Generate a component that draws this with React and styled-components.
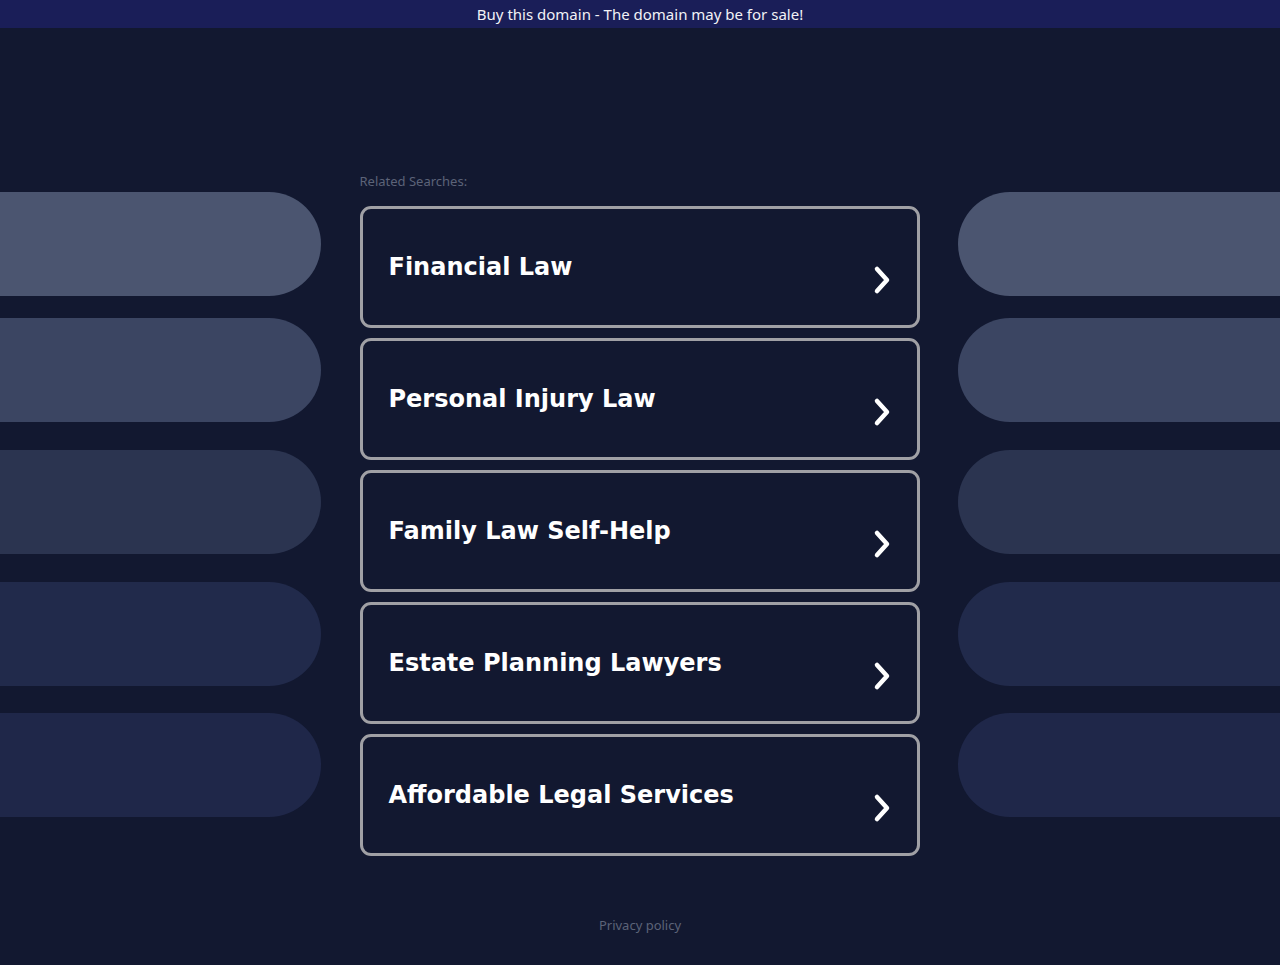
import React from 'react';
import styled, { createGlobalStyle } from 'styled-components';

const searches = [
    'Financial Law',
    'Personal Injury Law',
    'Family Law Self-Help',
    'Estate Planning Lawyers',
    'Affordable Legal Services',
];

// side decoration tones, lightest at the top
const pillTones = ['#4b5570', '#3b4562', '#2b3450', '#212a4b', '#1f2749'];

const GlobalStyle = createGlobalStyle`
    html, body {
        margin: 0;
        padding: 0;
        background: #121830;
    }
    body {
        font-family: "Noto Sans", "Open Sans", sans-serif;
        overflow: hidden;
    }
`;

const Page = styled.div`
    width: 1280px;
    height: 965px;
    background: #121830;
    display: flex;
    flex-direction: column;
    overflow: hidden;
`;

const TopBar = styled.div`
    height: 28px;
    background: #1a1e58;
    color: #f2f2f6;
    font-size: 15px;
    display: flex;
    align-items: center;
    justify-content: center;
    padding-bottom: 1px;
    box-sizing: border-box;
`;

const Main = styled.div`
    display: grid;
    grid-template-columns: 321px 560px 322px;
    justify-content: space-between;
    column-gap: 38px;
    width: 1280px;
`;

const SideColumn = styled.div`
    display: flex;
    flex-direction: column;
    padding-top: 164px;
`;

const Pill = styled.div`
    height: 104px;
    background: ${(p) => p.$tone};
    border-radius: ${(p) => (p.$side === 'left' ? '0 52px 52px 0' : '52px 0 0 52px')};
    margin-top: ${(p) => p.$gap}px;
`;

const Center = styled.div`
    display: flex;
    flex-direction: column;
    padding-top: 145px;
`;

const Label = styled.div`
    color: #5c6378;
    font-size: 13px;
    line-height: 16px;
    margin-bottom: 17px;
`;

const CardList = styled.div`
    display: flex;
    flex-direction: column;
    gap: 10px;
`;

const Card = styled.a`
    box-sizing: border-box;
    height: 122px;
    border: 3px solid #a0a0a5;
    border-radius: 11px;
    display: flex;
    align-items: center;
    justify-content: space-between;
    padding: 0 25px 0 26px;
    color: #ffffff;
    text-decoration: none;
`;

const CardTitle = styled.span`
    font-family: "DejaVu Sans", sans-serif;
    font-weight: bold;
    font-size: 24px;
    margin-top: -1px;
`;

const Chevron = styled.svg`
    width: 20px;
    height: 30px;
    margin-top: 25px;
`;

const Footer = styled.div`
    margin-top: auto;
    padding-bottom: 31px;
    text-align: center;
    color: #5c6378;
    font-size: 13px;
`;

const gaps = [0, 22, 28, 28, 27];

const App = () => {
    return (
        <>
            <GlobalStyle />
            <Page>
                <TopBar>Buy this domain - The domain may be for sale!</TopBar>
                <Main>
                    <SideColumn>
                        {pillTones.map((tone, i) => (
                            <Pill key={i} $tone={tone} $side="left" $gap={gaps[i]} />
                        ))}
                    </SideColumn>
                    <Center>
                        <Label>Related Searches:</Label>
                        <CardList>
                            {searches.map((title) => (
                                <Card key={title} href="#">
                                    <CardTitle>{title}</CardTitle>
                                    <Chevron viewBox="0 0 20 30">
                                        <path d="M5 4 L15 15 L5 26" fill="none" stroke="#ffffff"
                                            strokeWidth="4.5" strokeLinecap="round" strokeLinejoin="round" />
                                    </Chevron>
                                </Card>
                            ))}
                        </CardList>
                    </Center>
                    <SideColumn>
                        {pillTones.map((tone, i) => (
                            <Pill key={i} $tone={tone} $side="right" $gap={gaps[i]} />
                        ))}
                    </SideColumn>
                </Main>
                <Footer>Privacy policy</Footer>
            </Page>
        </>
    );
};

export default App;
